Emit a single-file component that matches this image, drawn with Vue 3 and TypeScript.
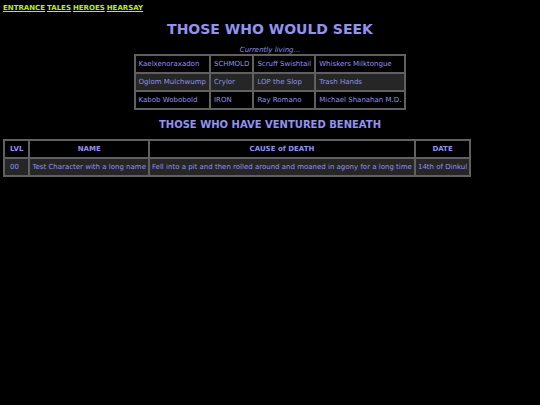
<script setup lang="ts">
interface Death {
  level: string
  name: string
  cause: string
  date: string
}

const links: string[] = ['ENTRANCE', 'TALES', 'HEROES', 'HEARSAY']

const living: string[][] = [
  ['Kaelxenoraxadon', 'SCHMOLD', 'Scruff Swishtail', 'Whiskers Milktongue'],
  ['Oglom Mulchwump', 'Crylor', 'LOP the Slop', 'Trash Hands'],
  ['Kabob Wobobold', 'IRON', 'Ray Romano', 'Michael Shanahan M.D.'],
]

const deaths: Death[] = [
  {
    level: '00',
    name: 'Test Character with a long name',
    cause: 'Fell into a pit and then rolled around and moaned in agony for a long time',
    date: '14th of Dinkul',
  },
]
</script>

<template>
  <div class="page">
    <nav class="menu">
      <a v-for="link in links" :key="link" :href="'#' + link.toLowerCase()">{{ link }}</a>
    </nav>
    <h1>THOSE WHO WOULD SEEK</h1>
    <table class="living">
      <caption>Currently living...</caption>
      <tbody>
        <tr v-for="row in living" :key="row[0]">
          <td v-for="hero in row" :key="hero">{{ hero }}</td>
        </tr>
      </tbody>
    </table>
    <h2>THOSE WHO HAVE VENTURED BENEATH</h2>
    <table class="dead">
      <thead>
        <tr>
          <th class="level" scope="col">LVL</th>
          <th scope="col">NAME</th>
          <th scope="col">CAUSE of DEATH</th>
          <th scope="col">DATE</th>
        </tr>
      </thead>
      <tbody>
        <tr v-for="death in deaths" :key="death.name">
          <td class="level">{{ death.level }}</td>
          <td>{{ death.name }}</td>
          <td>{{ death.cause }}</td>
          <td>{{ death.date }}</td>
        </tr>
      </tbody>
    </table>
  </div>
</template>

<style>
body {
  background: #000;
}
</style>

<style scoped>
.page {
  padding: 3px;
  color: #9292f0;
  font-family: Verdana, 'DejaVu Sans', sans-serif;
  font-size: 7px;
  line-height: 10px;
}

.menu {
  display: flex;
  gap: 2px;
}

.menu a {
  color: #b4f01e;
  font-weight: bold;
}

h1 {
  margin: 8px 0 9px;
  font-size: 14px;
  line-height: 16px;
  text-align: center;
}

h2 {
  margin: 9px 0 8px;
  font-size: 10px;
  line-height: 12px;
  text-align: center;
}

table {
  border: 1px solid #606060;
  border-spacing: 0;
}

.living {
  margin: 0 auto;
}

caption {
  font-style: italic;
  line-height: 8px;
}

th,
td {
  padding: 4px 3px;
  border: 1px solid #606060;
  line-height: 8px;
  white-space: nowrap;
}

.dead th,
.dead td {
  padding: 4px 2px;
}

.dead .level {
  padding: 4px 5px;
}

.living tr:nth-child(even),
.dead tbody tr:nth-child(odd) {
  background: #262626;
}
</style>
